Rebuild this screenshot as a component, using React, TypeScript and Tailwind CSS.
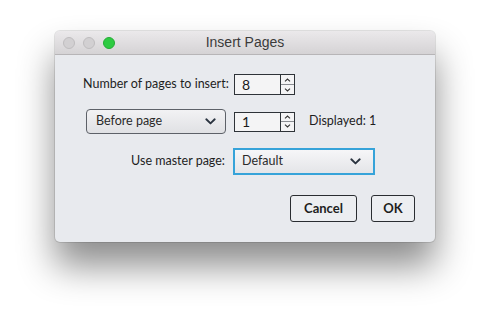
import React from "react";

function Chevron({ className = "" }: { className?: string }) {
  return (
    <svg width="11" height="7" viewBox="0 0 11 7" className={className}>
      <path d="M1.3 1.3 L5.5 5.4 L9.7 1.3" fill="none" stroke="#2b3440" strokeWidth="1.9" strokeLinecap="round" strokeLinejoin="round" />
    </svg>
  );
}

function Spin({ value, h }: { value: string; h: number }) {
  return (
    <div className="flex items-stretch" style={{ height: h }}>
      <div className="w-[47px] border border-[#2e3338] bg-[#f4f4f5] flex items-center pl-[7px] text-[14px] text-[#1a1a1a]">
        {value}
      </div>
      <div className="w-[14px] flex flex-col border border-l-0 border-[#2e3338] bg-[#f4f4f5]">
        <div className="flex-1 flex items-center justify-center border-b border-[#8a8d92]">
          <svg width="7" height="4" viewBox="0 0 7 4"><path d="M1 3.3 L3.5 1 L6 3.3" fill="none" stroke="#333" strokeWidth="1.1" /></svg>
        </div>
        <div className="flex-1 flex items-center justify-center">
          <svg width="7" height="4" viewBox="0 0 7 4"><path d="M1 0.7 L3.5 3 L6 0.7" fill="none" stroke="#333" strokeWidth="1.1" /></svg>
        </div>
      </div>
    </div>
  );
}

export default function App() {
  const font = { fontFamily: "Lato, 'Noto Sans', sans-serif" };
  return (
    <div className="w-[490px] h-[323px] bg-white overflow-hidden pl-[55px] pt-[31px]" style={font}>
      <div className="w-[380px] h-[211px] rounded-[5px] bg-[#e8eaee] shadow-[0_24px_36px_rgba(0,0,0,0.45),0_0_0_1px_rgba(0,0,0,0.1)] overflow-hidden flex flex-col">
        <div className="h-[24px] shrink-0 bg-gradient-to-b from-[#ebe9eb] to-[#d5d3d5] border-b border-[#b7b5b7] flex items-center relative">
          <div className="flex gap-[8px] pl-[8px]">
            <div className="w-[12px] h-[12px] rounded-full bg-[#d2d0d2] border border-[#bfbdbf]" />
            <div className="w-[12px] h-[12px] rounded-full bg-[#d2d0d2] border border-[#bfbdbf]" />
            <div className="w-[12px] h-[12px] rounded-full bg-[#2ecb42] border border-[#24ad35]" />
          </div>
          <div className="absolute inset-0 flex items-center justify-center text-[14px] text-[#3b3b3b]" style={{ fontFamily: "'Helvetica Neue', 'Liberation Sans', sans-serif" }}>
            Insert Pages
          </div>
        </div>
        <div className="flex flex-col pl-[28px] text-[12.5px] text-[#1e1e1e] whitespace-nowrap">
          <div className="flex items-center mt-[19px] h-[21px]">
            <div className="w-[143px] text-right pr-[1px]">Number of pages to insert:</div>
            <div className="ml-[8px]">
              <Spin value="8" h={21} />
            </div>
          </div>
          <div className="flex items-center mt-[14px] h-[25px]">
            <div className="w-[143px] flex justify-end">
              <div className="w-[140px] h-[25px] rounded-[4px] border border-[#5d6168] bg-gradient-to-b from-[#f2f2f4] to-[#e0e1e4] flex items-center justify-between pl-[9px] pr-[9px] text-[#2a2a2a]">
                <span>Before page</span>
                <Chevron />
              </div>
            </div>
            <div className="ml-[8px]">
              <Spin value="1" h={20} />
            </div>
            <div className="ml-[14px]">Displayed: 1</div>
          </div>
          <div className="flex items-center mt-[14px] h-[27px]">
            <div className="w-[143px] text-right pr-[1px]">Use master page:</div>
            <div className="ml-[7px] w-[142px] h-[27px] border-[2.5px] border-[#36a3d9] bg-gradient-to-b from-[#f6f6f8] to-[#e4e5e8] flex items-center justify-between pl-[7px] pr-[12px] text-[#2a2a2a]">
              <span>Default</span>
              <Chevron />
            </div>
          </div>
          <div className="flex justify-end gap-[14px] mt-[20px] pr-[20px]">
            <button className="w-[67px] h-[27px] rounded-[3px] border border-[#2a2d31] bg-[#eceef1] font-bold text-[13px] text-[#1e1e1e]">Cancel</button>
            <button className="w-[44px] h-[27px] rounded-[3px] border border-[#2a2d31] bg-[#eceef1] font-bold text-[13px] text-[#1e1e1e]">OK</button>
          </div>
        </div>
      </div>
    </div>
  );
}
